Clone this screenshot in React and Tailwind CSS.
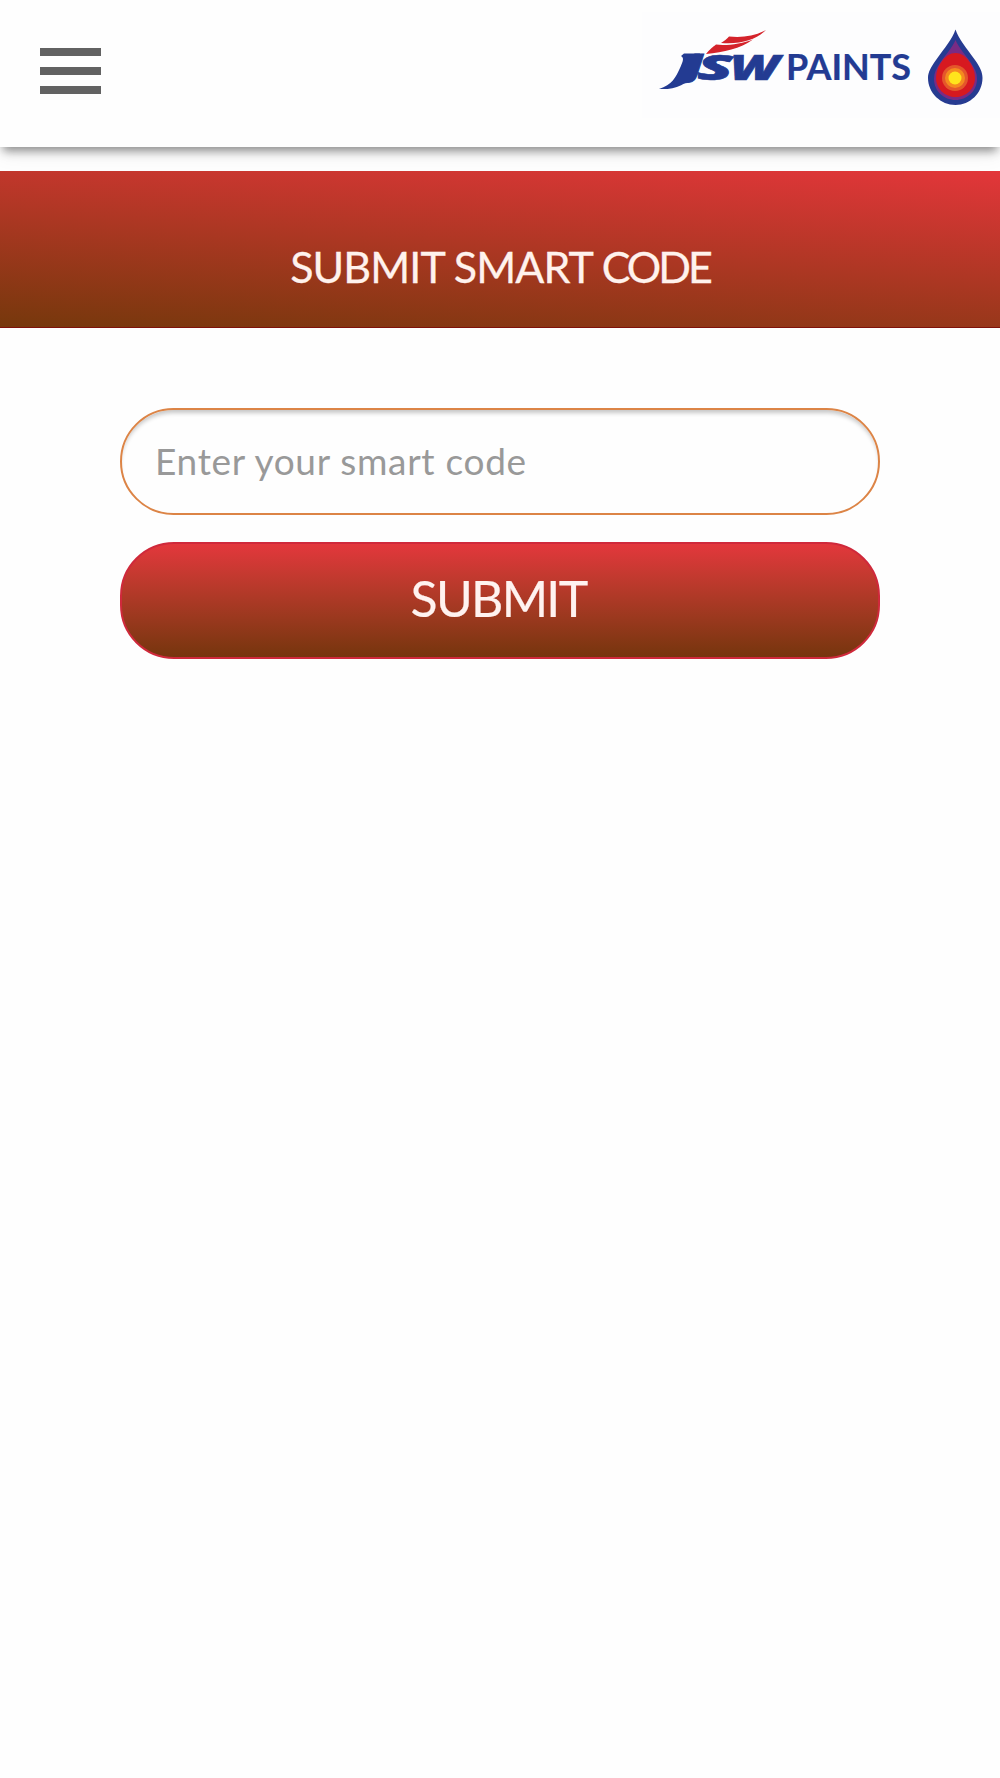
function Logo() {
  return (
    <svg className="h-[120px] w-[360px]" viewBox="0 0 360 120" role="img" aria-label="JSW Paints">
      <rect x="2" y="2" width="358" height="106" fill="#fdfdfe" />
      <g fill="#d4232b">
        <path d="M66 44 C70 39 73 37 76 34.500 C85 36 102 34 113 29.500 C100 39 84 42 66 44Z" />
        <path d="M81 33 C84 31 87 29 89 26.500 C102 28 115 26 126 20 C116 30 101 34.500 81 33Z" />
      </g>
      <g fill="#233b92" stroke="#233b92">
        <path stroke="none" d="M44 43.500 H60 L55 63 C47 75 34 80 19 79 C32 75 36 67 40 58 C42 53 45 48 41 46Z" />
        <text x="46" y="66" strokeWidth="0.8" fontFamily="Noto Sans, sans-serif" fontWeight="900" fontStyle="italic" fontSize="30.500" textLength="17.500" lengthAdjust="spacingAndGlyphs">J</text>
        <text x="57" y="69.5" strokeWidth="0.6" fontFamily="Noto Sans, sans-serif" fontWeight="900" fontStyle="italic" fontSize="35" textLength="36" lengthAdjust="spacingAndGlyphs">S</text>
        <text x="90" y="69.5" strokeWidth="0.6" fontFamily="Noto Sans, sans-serif" fontWeight="900" fontStyle="italic" fontSize="36" textLength="49" lengthAdjust="spacingAndGlyphs">W</text>
        <text x="146" y="70" strokeWidth="0.2" fontFamily="Lato, sans-serif" fontWeight="700" fontSize="36" textLength="125" lengthAdjust="spacingAndGlyphs">PAINTS</text>
      </g>
      <path fill="#263b91" d="M315.500 19.500 C319 30 326 37 335 50 C340 57 342.500 62 342.500 68 C342.500 83 330 95 315.500 95 C301 95 288 83 288 68 C288 62 291 57 296 50 C305 37 312 30 315.500 19.500Z" />
      <path fill="#792b84" d="M315.500 30 C319 38 325 44 331 53 C335 59 337 63 337 69 C337 81 327 90 315.500 90 C304 90 294 81 294 69 C294 63 296 59 300 53 C306 44 312 38 315.500 30Z" />
      <path fill="#d71920" d="M315.500 43 C326 43 335 57 335 68 C335 79 326 87 315.500 87 C305 87 296 79 296 68 C296 57 305 43 315.500 43Z" />
      <circle cx="315" cy="68" r="13" fill="#e4572b" />
      <circle cx="315" cy="68" r="10" fill="#f58a20" />
      <circle cx="315" cy="68" r="6.500" fill="#ffe51c" />
    </svg>
  );
}

export default function App() {
  return (
    <div className="min-h-[1778px] w-full bg-[#fefefe] font-[Lato,sans-serif]">
      <header className="flex h-[147px] items-start justify-between bg-[#fefefe] pl-10 shadow-[0_7px_9px_-3px_rgba(0,0,0,0.42),0_8px_20px_rgba(0,0,0,0.06)]">
        <button aria-label="Menu" className="mt-12 flex w-[61px] flex-col gap-[11px]">
          <span className="h-2 w-full bg-[#626262]" />
          <span className="h-2 w-full bg-[#626262]" />
          <span className="h-2 w-full bg-[#626262]" />
        </button>
        <div className="pt-[10px]"><Logo /></div>
      </header>
      <section className="relative mt-6 flex h-[157px] items-center justify-center border-b border-[#80110b] bg-[linear-gradient(4deg,#76380c,#e3363a)] pt-[34px]">
        <h1 className="whitespace-nowrap text-[43px] leading-none tracking-[-0.9px] text-[#fff2ed] [-webkit-text-stroke:0.3px_#fff2ed]">
          SUBMIT SMART <span className="tracking-[-3px]">CODE</span>
        </h1>
      </section>
      <main className="mx-auto mt-20 flex w-[760px] flex-col gap-[27px]">
        <input
          aria-label="Smart code"
          placeholder="Enter your smart code"
          className="h-[107px] w-full rounded-[54px] border-[2.500px] border-[#dc8446] bg-[#fefefe] px-[33px] pb-[2px] text-[37px] tracking-[0.7px] shadow-[inset_0_5px_4px_-2px_rgba(0,0,0,0.22)] outline-none placeholder:text-[#999999]"
        />
        <button className="h-[117px] w-full rounded-[54px] border-2 border-[#cf293b] bg-linear-to-t from-[#76350d] to-[#e3373c] pb-[5px] pr-[3px] text-[50px] leading-none tracking-[-1.7px] text-[#fff2f0] [-webkit-text-stroke:0.2px_#fff2f0]">SUBMIT</button>
      </main>
    </div>
  );
}
